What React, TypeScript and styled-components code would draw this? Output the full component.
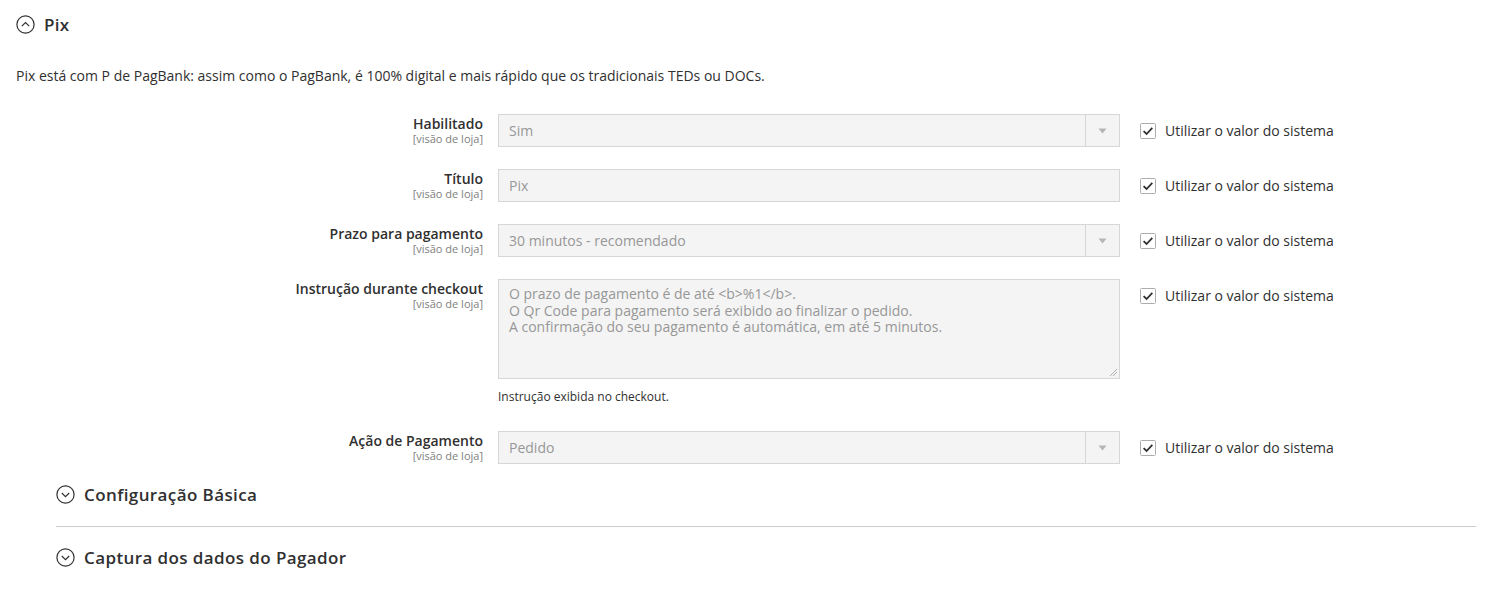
import React from "react";
import styled, { createGlobalStyle } from "styled-components";

const GlobalStyle = createGlobalStyle`
  html, body {
    margin: 0;
    padding: 0;
    background: #fff;
  }
  body {
    font-family: "Open Sans", "Liberation Sans", sans-serif;
    color: #303030;
    font-size: 14px;
  }
`;

type Field = {
  label: string;
  kind: "select" | "input" | "textarea";
  value: string;
  note?: string;
};

const fields: Field[] = [
  { label: "Habilitado", kind: "select", value: "Sim" },
  { label: "Título", kind: "input", value: "Pix" },
  { label: "Prazo para pagamento", kind: "select", value: "30 minutos - recomendado" },
  {
    label: "Instrução durante checkout",
    kind: "textarea",
    value:
      "O prazo de pagamento é de até <b>%1</b>.\nO Qr Code para pagamento será exibido ao finalizar o pedido.\nA confirmação do seu pagamento é automática, em até 5 minutos.",
    note: "Instrução exibida no checkout.",
  },
  { label: "Ação de Pagamento", kind: "select", value: "Pedido" },
];

const CollapseIcon = ({ open }: { open?: boolean }) => (
  <svg width="19" height="19" viewBox="0 0 19 19">
    <circle cx="9.5" cy="9.5" r="8.6" fill="none" stroke="#303030" strokeWidth="1.2" />
    {open ? (
      <path d="M5.8 11.2 L9.5 7.5 L13.2 11.2" fill="none" stroke="#303030" strokeWidth="1.2" />
    ) : (
      <path d="M5.8 8 L9.5 11.7 L13.2 8" fill="none" stroke="#303030" strokeWidth="1.2" />
    )}
  </svg>
);

const CheckIcon = () => (
  <svg width="16" height="16" viewBox="0 0 16 16">
    <rect x="0.5" y="0.5" width="15" height="15" rx="1" fill="#fff" stroke="#adadad" />
    <path d="M3.6 8.2 L6.6 11 L12.3 4.9" fill="none" stroke="#303030" strokeWidth="1.8" />
  </svg>
);

export default function App() {
  return (
    <>
      <GlobalStyle />
      <Page>
        <SectionHead>
          <CollapseIcon open />
          <HeadTitle>Pix</HeadTitle>
        </SectionHead>
        <Description>
          Pix está com P de PagBank: assim como o PagBank, é 100% digital e mais rápido que os tradicionais TEDs ou DOCs.
        </Description>
        <Form>
          {fields.map((f) => (
            <Row key={f.label}>
              <LabelCell>
                <LabelText>{f.label}</LabelText>
                <Scope>[visão de loja]</Scope>
              </LabelCell>
              <ValueCell>
                {f.kind === "textarea" ? (
                  <TextArea>{f.value}</TextArea>
                ) : (
                  <Control>
                    <ControlText>{f.value}</ControlText>
                    {f.kind === "select" && (
                      <Arrow>
                        <svg width="9" height="6" viewBox="0 0 9 6">
                          <path d="M0.5 0.5 L8.5 0.5 L4.5 5.5 Z" fill="#b5b5b5" />
                        </svg>
                      </Arrow>
                    )}
                  </Control>
                )}
                {f.note && <Note>{f.note}</Note>}
              </ValueCell>
              <SystemCell>
                <CheckIcon />
                <span>Utilizar o valor do sistema</span>
              </SystemCell>
            </Row>
          ))}
        </Form>
        <SubSections>
          <SubHead $divider>
            <CollapseIcon />
            <SubTitle>Configuração Básica</SubTitle>
          </SubHead>
          <SubHead>
            <CollapseIcon />
            <SubTitle>Captura dos dados do Pagador</SubTitle>
          </SubHead>
        </SubSections>
      </Page>
    </>
  );
}

const Page = styled.div`
  padding: 13px 21px 0 16px;
`;

const SectionHead = styled.div`
  display: flex;
  align-items: center;
  gap: 9px;
  height: 22px;
`;

const HeadTitle = styled.h2`
  margin: 0;
  font-size: 17px;
  font-weight: 600;
  color: #303030;
  letter-spacing: 0.3px;
`;

const Description = styled.p`
  margin: 31px 0 0;
  font-size: 14px;
  line-height: 20px;
`;

const Form = styled.div`
  display: flex;
  flex-direction: column;
  gap: 22px;
  margin-top: 28px;
`;

const Row = styled.div`
  display: grid;
  grid-template-columns: 467px 622px auto;
  column-gap: 15px;
  align-items: start;
`;

const LabelCell = styled.div`
  display: flex;
  flex-direction: column;
  align-items: flex-end;
  padding-top: 1px;
`;

const LabelText = styled.span`
  font-size: 14px;
  font-weight: 600;
  line-height: 18px;
  color: #303030;
`;

const Scope = styled.span`
  font-size: 11px;
  line-height: 12px;
  color: #808080;
`;

const ValueCell = styled.div`
  display: flex;
  flex-direction: column;
`;

const Control = styled.div`
  display: flex;
  align-items: center;
  height: 33px;
  box-sizing: border-box;
  border: 1px solid #d6d6d6;
  background: #f4f4f4;
`;

const ControlText = styled.span`
  flex: 1;
  padding: 0 10px;
  font-size: 14px;
  color: #979797;
`;

const Arrow = styled.span`
  display: flex;
  align-items: center;
  justify-content: center;
  width: 33px;
  height: 100%;
  border-left: 1px solid #d6d6d6;
`;

const TextArea = styled.div`
  height: 100px;
  box-sizing: border-box;
  border: 1px solid #d6d6d6;
  background: #f4f4f4;
  padding: 6px 10px;
  font-size: 14px;
  line-height: 16.5px;
  color: #979797;
  white-space: pre-line;
  position: relative;

  &::after {
    content: "";
    position: absolute;
    right: 2px;
    bottom: 2px;
    width: 7px;
    height: 7px;
    background: linear-gradient(135deg, transparent 45%, #b0b0b0 45%, #b0b0b0 52%, transparent 52%, transparent 70%, #b0b0b0 70%, #b0b0b0 77%, transparent 77%);
  }
`;

const Note = styled.span`
  margin: 9px 0 4px;
  font-size: 12px;
  line-height: 17px;
  color: #303030;
`;

const SystemCell = styled.label`
  display: flex;
  align-items: center;
  gap: 9px;
  height: 33px;
  margin-left: 5px;
  font-size: 14px;
  color: #303030;
`;

const SubSections = styled.div`
  margin: 15px 0 0 40px;
  display: flex;
  flex-direction: column;
`;

const SubHead = styled.div<{ $divider?: boolean }>`
  display: flex;
  align-items: center;
  gap: 9px;
  height: 31px;
  padding-bottom: ${(p) => (p.$divider ? "16px" : "0")};
  margin-bottom: ${(p) => (p.$divider ? "15px" : "0")};
  border-bottom: ${(p) => (p.$divider ? "1px solid #cccccc" : "none")};
`;

const SubTitle = styled.h3`
  margin: 0;
  font-size: 17px;
  font-weight: 600;
  color: #303030;
  letter-spacing: 0.4px;
`;
